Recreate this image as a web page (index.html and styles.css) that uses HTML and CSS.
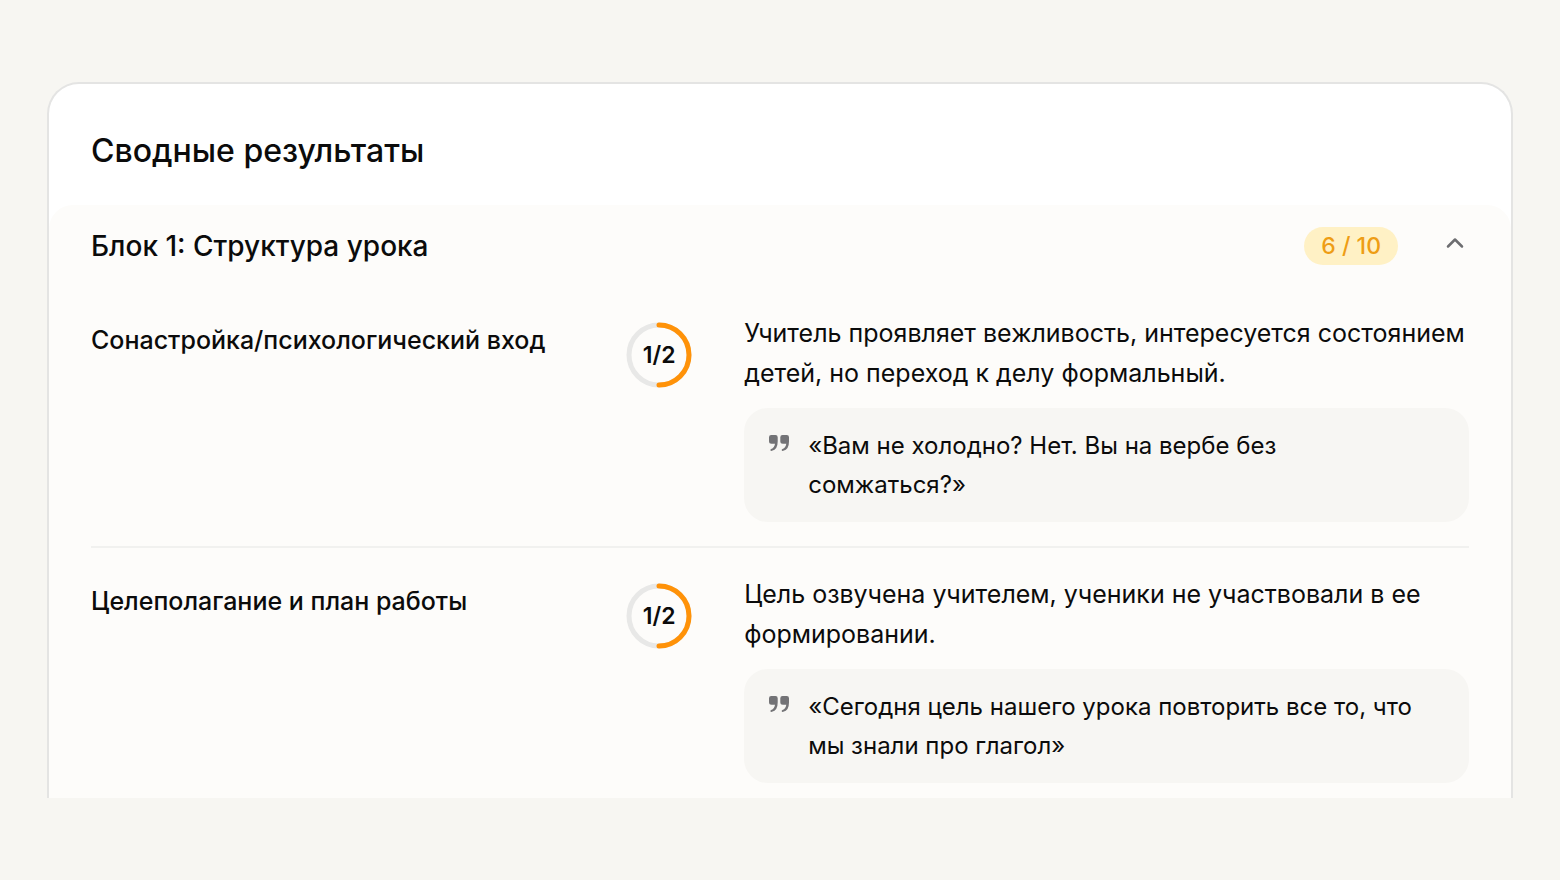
FILE: index.html
```html
<!DOCTYPE html>
<html lang="ru">
<head>
    <meta charset="UTF-8">
    <meta name="viewport" content="width=device-width, initial-scale=1.0">
    <title>Сводные результаты</title>
    <link rel="stylesheet" href="styles.css">
</head>
<body>
    <main class="card">
        <h1 class="card-title">Сводные результаты</h1>

        <section class="block">
            <div class="block-header">
                <h2 class="block-title">Блок 1: Структура урока</h2>
                <span class="score">6 / 10</span>
                <button class="toggle" type="button" aria-label="Свернуть блок" aria-expanded="true">
                    <svg width="20" height="12" viewBox="0 0 20 12"><path d="M3 9.5 10 2.5 17 9.5"/></svg>
                </button>
            </div>

            <div class="row">
                <h3 class="row-title">Сонастройка/психологический вход</h3>
                <div class="ring">
                    <svg viewBox="0 0 66 66">
                        <circle class="ring-track" cx="33" cy="33" r="30"/>
                        <path class="ring-value" d="M33 3a30 30 0 0 1 0 60"/>
                    </svg>
                    <span class="ring-text">1/2</span>
                </div>
                <div class="row-body">
                    <p class="comment">Учитель проявляет вежливость, интересуется состоянием детей, но переход к делу формальный.</p>
                    <blockquote class="quote">
                        <svg class="quote-icon" viewBox="0 0 20 18"><path d="M2.2 1h4.300Q8.700 1 8.700 3.200V7.500q0 8-5.700 9.300-1.400.3-1.600-.6-.2-.8.8-1.200 3.300-1.300 3.800-5.300H2.500Q0 9.700 0 7.200v-4Q0 1 2.200 1Z"/><path d="M13.500 1h4.300Q20 1 20 3.200V7.500q0 8-5.700 9.300-1.400.3-1.600-.6-.2-.8.8-1.200 3.300-1.300 3.800-5.300h-3.500Q11.300 9.700 11.300 7.200v-4Q11.300 1 13.500 1Z"/></svg>
                        <p class="quote-text">«Вам не холодно? Нет. Вы на вербе без сомжаться?»</p>
                    </blockquote>
                </div>
            </div>

            <div class="row">
                <h3 class="row-title">Целеполагание и план работы</h3>
                <div class="ring">
                    <svg viewBox="0 0 66 66">
                        <circle class="ring-track" cx="33" cy="33" r="30"/>
                        <path class="ring-value" d="M33 3a30 30 0 0 1 0 60"/>
                    </svg>
                    <span class="ring-text">1/2</span>
                </div>
                <div class="row-body">
                    <p class="comment">Цель озвучена учителем, ученики не участвовали в ее формировании.</p>
                    <blockquote class="quote">
                        <svg class="quote-icon" viewBox="0 0 20 18"><path d="M2.2 1h4.300Q8.700 1 8.700 3.200V7.500q0 8-5.700 9.300-1.400.3-1.600-.6-.2-.8.8-1.200 3.300-1.300 3.800-5.300H2.500Q0 9.700 0 7.200v-4Q0 1 2.200 1Z"/><path d="M13.500 1h4.300Q20 1 20 3.200V7.500q0 8-5.700 9.300-1.400.3-1.600-.6-.2-.8.8-1.200 3.300-1.300 3.800-5.300h-3.500Q11.300 9.700 11.300 7.200v-4Q11.300 1 13.500 1Z"/></svg>
                        <p class="quote-text">«Сегодня цель нашего урока повторить все то, что мы знали про глагол»</p>
                    </blockquote>
                </div>
            </div>
        </section>
    </main>
</body>
</html>
```
FILE: styles.css
```css
* {
    box-sizing: border-box;
}
body {
    margin: 0;
    padding: 82px 47px;
    background: #f7f6f2;
    color: #0b0b0b;
    font-family: Inter, "Liberation Sans", sans-serif;
    font-size: 24px;
    line-height: 40px;
}
h1, h2, h3, p, blockquote {
    margin: 0;
    font-weight: 500;
}

/* карточка с результатами */
.card {
    background: #fff;
    border: 2px solid #e4e4e3;
    border-bottom: 0;
    border-radius: 32px 32px 0 0;
}
.card-title {
    padding: 47px 42px 34px;
    font-size: 32px;
}
.block {
    padding: 0 42px;
    background: #fdfcfa;
    border-radius: 24px 24px 0 0;
}
.block-header {
    display: flex;
    align-items: center;
    height: 82px;
}
.block-title {
    flex: 1;
    font-size: 28px;
}
.score {
    padding: 0 17px;
    border-radius: 20px;
    background: #fff1c5;
    color: #ee9d15;
    font-size: 23px;
    font-weight: 500;
    line-height: 38px;
}
.toggle {
    display: flex;
    align-items: center;
    justify-content: center;
    width: 28px;
    height: 40px;
    margin-left: 43px;
    padding: 0 0 6px;
    border: 0;
    background: none;
    cursor: pointer;
}
.toggle svg {
    flex: none;
    fill: none;
    stroke: #6d6d70;
    stroke-width: 2.5;
    stroke-linecap: round;
    stroke-linejoin: round;
}

/* критерий: название, балл, комментарий */
.row {
    display: grid;
    grid-template-columns: 2fr 66px 3fr;
    column-gap: 52px;
    padding: 26px 0 24px;
}
.row + .row {
    padding-bottom: 15px;
    border-top: 2px solid #f1f1ef;
}
.row-title {
    padding-top: 7px;
    font-size: 25px;
}
.ring {
    position: relative;
    width: 66px;
    height: 66px;
    margin-top: 9px;
}
.ring svg {
    display: block;
    fill: none;
    stroke-width: 5;
}
.ring-track {
    stroke: #e8e8e7;
}
.ring-value {
    stroke: #ff9208;
    stroke-linecap: round;
}
.ring-text {
    position: absolute;
    inset: 0;
    font-size: 23px;
    font-weight: 600;
    line-height: 66px;
    text-align: center;
}
.comment {
    font-size: 25px;
    font-weight: 400;
}
.quote {
    display: flex;
    gap: 19px;
    margin-top: 15px;
    padding: 18px 40px 18px 25px;
    border-radius: 24px;
    background: #f7f6f3;
}
.quote-icon {
    flex: none;
    width: 20px;
    height: 18px;
    margin-top: 8px;
    fill: #737376;
}
.quote-text {
    font-weight: 400;
    line-height: 39px;
}
```
